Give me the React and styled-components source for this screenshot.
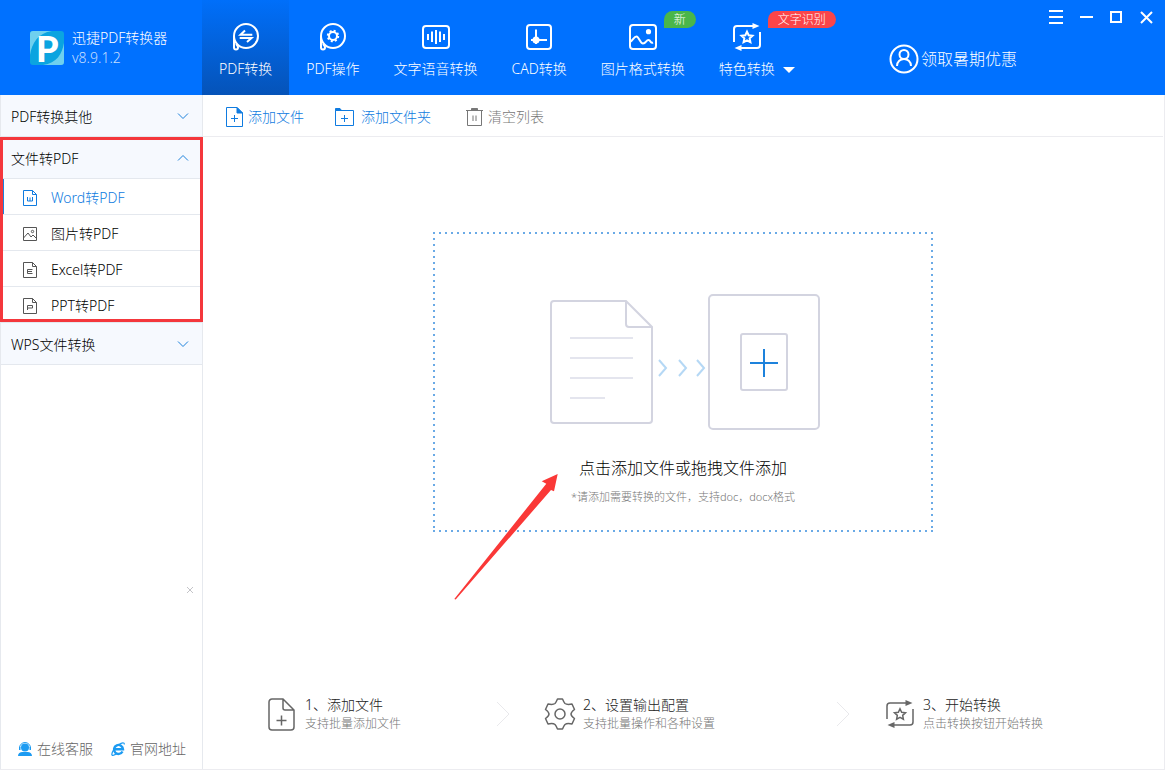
import React, { useState } from 'react';
import styled, { createGlobalStyle, css } from 'styled-components';

const starPoints = (cx, cy, outer, inner) =>
    Array.from({ length: 10 }, (_, i) => {
        const r = i % 2 ? inner : outer;
        const a = (Math.PI / 5) * i - Math.PI / 2;
        return `${(cx + r * Math.cos(a)).toFixed(2)},${(cy + r * Math.sin(a)).toFixed(2)}`;
    }).join(' ');

const Bubble = () => (
    <>
        <circle cx='15' cy='14' r='12' />
        <path d='M3 14V25.5a2 2 0 1 0 4 0C7 24 6.300 23.500 5 22' />
    </>
);

const ConvertIcon = () => (
    <LineIcon size={30}>
        <Bubble />
        <path d='M14 8.500L9.500 12.700H21.300M8.700 16H20.500L16 20' />
    </LineIcon>
);

const OperateIcon = () => (
    <LineIcon size={30}>
        <Bubble />
        <circle cx='15' cy='14' r='4' />
        <circle cx='15' cy='14' r='5.200' strokeDasharray='2 2.084' strokeWidth='2' />
    </LineIcon>
);

const VoiceIcon = () => (
    <LineIcon size={30}>
        <rect x='2' y='4' width='26' height='22' rx='3' />
        <path d='M7 12v6M11 9.500v10.500M15 8v14M19 9.500v10.500M23 12v6' />
    </LineIcon>
);

const CadIcon = () => (
    <LineIcon size={30}>
        <rect x='3' y='3' width='24' height='24' rx='3' />
        <path d='M12 7.500V22M7 18h16' />
        <circle cx='12' cy='18' r='3.500' fill='currentColor' stroke='none' />
    </LineIcon>
);

const PictureIcon = () => (
    <LineIcon size={30}>
        <rect x='2' y='3' width='26' height='24' rx='3' />
        <circle cx='20.500' cy='9.700' r='2.600' fill='currentColor' stroke='none' />
        <path d='M2 20C5 18 6 14.500 8.500 14.500S12 21.500 15 21.500S18 18 20.500 18S22 22 25 20.500' />
    </LineIcon>
);

const CycleIcon = ({ stroke }) => (
    <LineIcon size={30} $stroke={stroke}>
        <path d='M2 20V7a3 3 0 0 1 3-3H21M28 10V23a3 3 0 0 1-3 3H9' />
        <path d='M20.500 1l7 3-7 3zM9.500 23l-7 3 7 3z' fill='currentColor' stroke='none' />
        <polygon points={starPoints(15, 15.5, 5.8, 2.8)} />
    </LineIcon>
);

const AddFileIcon = () => (
    <LineIcon size={20} $stroke={1}>
        <path d='M3.500 .5H14L19.500 6V19.500H3.500z' />
        <path d='M14 .5V6H19.500z' fill='currentColor' />
        <path d='M11.500 8v7M8 11.500h7' />
    </LineIcon>
);

const AddFolderIcon = () => (
    <LineIcon size={20} $stroke={1}>
        <path d='M-.5 3.500H17.500V18.500H-.5z' />
        <path d='M-.5 3.500V1.500H4L5.500 3.500z' fill='currentColor' />
        <path d='M8.500 8v7M5 11.500h7' />
    </LineIcon>
);

const TrashIcon = () => (
    <LineIcon size={20} $stroke={1}>
        <path d='M3 3.500H20M4.500 3.500V18.500H18.500V3.500M10 8.500V14M13 8.500V14' />
        <path d='M8.500 1.500h6v2h-6z' fill='currentColor' />
    </LineIcon>
);

const DocIcon = ({ glyph }) => (
    <LineIcon size={16} $stroke={1}>
        <path d='M1.500 .5H10.500L14.500 4.500V15.500H1.500zM10.500 .5V4.500H14.500' />
        <path d={glyph} />
    </LineIcon>
);

const ImageIcon = () => (
    <LineIcon size={16} $stroke={1}>
        <path d='M1.500 1.500H14.500V14.500H1.500zM1.500 12L6 7L9 11L11 9L14.500 12.500' />
        <circle cx='10.500' cy='5.500' r='1.200' />
    </LineIcon>
);

const StepFileIcon = () => (
    <LineIcon size={32} $stroke={1.5}>
        <path d='M7 1H17L28 12V29a3 3 0 0 1-3 3H6a3 3 0 0 1-3-3V4a3 3 0 0 1 3-3zM17 1V10a2 2 0 0 0 2 2H28' />
        <path d='M15.500 17.500v10M10.500 22.500h10' />
    </LineIcon>
);

const GearIcon = () => (
    <LineIcon size={32} $stroke={1.5}>
        <path d='M13.500 1H18.500Q20 4.500 21 5.500Q23 7 28 6L30.500 11.500Q27 14 27 16T30.500 20.500L28 26Q23 25 21 26.500Q20 27.500 18.500 31H13.500Q12 27.500 11 26.500Q9 25 4 26L1.500 20.500Q5 18 5 16T1.500 11.500L4 6Q9 7 11 5.500Q12 4.500 13.500 1z' strokeLinejoin='round' />
        <circle cx='16' cy='16' r='5' />
    </LineIcon>
);

const Chevron = ({ up }) => (
    <LineIcon size={12} $stroke={1}>
        <path d={up ? 'M1 7.500L6 2.500L11 7.500' : 'M1 2.500L6 7.500L11 2.500'} />
    </LineIcon>
);

const ServiceIcon = () => (
    <svg width='14' height='14' viewBox='0 0 14 14' fill='#1c9bf2'>
        <circle cx='7' cy='5.500' r='4' />
        <path d='M1.500 6a5.500 5.500 0 0 1 11 0' fill='none' stroke='#1c9bf2' />
        <path d='M1 5h1.500v3H1zM11.500 5H13v3h-1.500zM0 14c0-2.500 2-4 4.500-4h5c2.500 0 4.500 1.500 4.500 4z' />
    </svg>
);

const BrowserIcon = () => (
    <svg width='14' height='14' viewBox='0 0 14 14' fill='none' stroke='#1c9bf2'>
        <path d='M11.500 9.500A4.500 4.500 0 1 1 12 7.300H4' strokeWidth='2.400' />
        <path d='M8 2.500C11 .2 13.500 .2 13.300 2.500M2.500 8C.2 11.500 .3 14 2.500 13.300C3.500 13 4.500 12.500 5.500 11.800' strokeWidth='1.200' />
    </svg>
);

const TABS = [
    { name: 'PDF转换', Icon: ConvertIcon },
    { name: 'PDF操作', Icon: OperateIcon },
    { name: '文字语音转换', Icon: VoiceIcon },
    { name: 'CAD转换', Icon: CadIcon },
    { name: '图片格式转换', Icon: PictureIcon, badge: '新', tone: '#4ab64a' },
    { name: '特色转换', Icon: CycleIcon, badge: '文字识别', tone: '#fb4549', more: true },
];

const FILE_TYPES = [
    { name: 'Word转PDF', icon: <DocIcon glyph='M5.500 7V11H10.500V7M8 7.500V11' /> },
    { name: '图片转PDF', icon: <ImageIcon /> },
    { name: 'Excel转PDF', icon: <DocIcon glyph='M10.500 7.500H5.500V11.500H10.500M5.500 9.500H10' /> },
    { name: 'PPT转PDF', icon: <DocIcon glyph='M5.500 12V7.500H10.500V10H5.500' /> },
];

const STEPS = [
    { title: '1、添加文件', text: '支持批量添加文件', icon: <StepFileIcon /> },
    { title: '2、设置输出配置', text: '支持批量操作和各种设置', icon: <GearIcon /> },
    { title: '3、开始转换', text: '点击转换按钮开始转换', icon: <CycleIcon stroke={1.5} /> },
];

const App = () => {

    const [tab, setTab] = useState('PDF转换');
    const [type, setType] = useState('Word转PDF');
    const [open, setOpen] = useState(true);

    return (
        <Window>
            <GlobalStyle />
            <Header>
                <Brand>
                    <Logo width='34' height='34' viewBox='0 0 34 34' aria-hidden='true'>
                        <rect width='34' height='34' rx='3' fill='#0ba4e0' />
                        <path d='M0 24V3a3 3 0 0 1 3-3H22C8 2 2 12 0 24z' fill='#6fd0ee' />
                        <path d='M34 12V31a3 3 0 0 1-3 3H13C27 32 32 23 34 12z' fill='#6fd0ee' />
                        <text x='6' y='31'>P</text>
                    </Logo>
                    <div>
                        <BrandName>迅捷PDF转换器</BrandName>
                        <Version>v8.9.1.2</Version>
                    </div>
                </Brand>
                <Nav>
                    {TABS.map(({ name, Icon, badge, tone, more }) => (
                        <Tab key={name} $active={tab === name} onClick={() => setTab(name)}>
                            <TabBody>
                                <TabIcon>
                                    <Icon />
                                    {badge && <Badge $tone={tone}>{badge}</Badge>}
                                </TabIcon>
                                {name}
                            </TabBody>
                            {more && <Caret />}
                        </Tab>
                    ))}
                </Nav>
                <Promo href='#promo'>
                    <LineIcon size={30}>
                        <circle cx='15' cy='15' r='13.500' />
                        <circle cx='15' cy='10.500' r='4.500' />
                        <path d='M8 22C8 12.500 22 12.500 22 22' />
                    </LineIcon>
                    领取暑期优惠
                </Promo>
                <Controls>
                    <Control aria-label='菜单'>
                        <LineIcon size={16}><path d='M1 2H15M1 8H15M1 14H15' /></LineIcon>
                    </Control>
                    <Control aria-label='最小化'>
                        <LineIcon size={16}><path d='M2 8H15' /></LineIcon>
                    </Control>
                    <Control aria-label='最大化'>
                        <LineIcon size={16}><path d='M3 3H13V13H3z' /></LineIcon>
                    </Control>
                    <Control aria-label='关闭'>
                        <LineIcon size={16}><path d='M3 3L14 14M14 3L3 14' /></LineIcon>
                    </Control>
                </Controls>
            </Header>
            <Body>
                <Sidebar>
                    <GroupButton>PDF转换其他<Chevron /></GroupButton>
                    <Highlighted>
                        <GroupButton aria-expanded={open} onClick={() => setOpen(!open)}>
                            文件转PDF<Chevron up={open} />
                        </GroupButton>
                        {open && FILE_TYPES.map(({ name, icon }) => (
                            <TypeButton key={name} $active={type === name} onClick={() => setType(name)}>
                                {icon}{name}
                            </TypeButton>
                        ))}
                    </Highlighted>
                    <GroupButton>WPS文件转换<Chevron /></GroupButton>
                    <Dismiss aria-label='关闭提示'>
                        <LineIcon size={8} $stroke={1}><path d='M1 1L7 7M7 1L1 7' /></LineIcon>
                    </Dismiss>
                    <Links>
                        <SideLink href='#service'><ServiceIcon />在线客服</SideLink>
                        <SideLink href='#site'><BrowserIcon />官网地址</SideLink>
                    </Links>
                </Sidebar>
                <Main>
                    <Toolbar>
                        <Tool><AddFileIcon />添加文件</Tool>
                        <Tool><AddFolderIcon />添加文件夹</Tool>
                        <Tool $muted><TrashIcon />清空列表</Tool>
                    </Toolbar>
                    <DropArea>
                        <DropZone>
                            <svg width='274' height='136' viewBox='-4 0 274 136' fill='none' strokeWidth='2' aria-hidden='true'>
                                <g stroke='#d3d4e0'>
                                    <path d='M4 7H76L102 33V126a3 3 0 0 1-3 3H4a3 3 0 0 1-3-3V10a3 3 0 0 1 3-3zM76 7V30a3 3 0 0 0 3 3H102' />
                                    <rect x='159' y='1' width='110' height='134' rx='4' />
                                    <rect x='191' y='40' width='46' height='56' rx='2' />
                                </g>
                                <path d='M20 44H83M20 64H83M20 84H83M20 104H55' stroke='#e4e5ee' />
                                <path d='M109 66L116 74L109 82M129 66L136 74L129 82M147 66L154 74L147 82' stroke='#b5d8f5' />
                                <path d='M200 69H228M214 55V83' stroke='#1d82dc' />
                            </svg>
                            <DropTitle>点击添加文件或拖拽文件添加</DropTitle>
                            <DropHint>*请添加需要转换的文件，支持doc，docx格式</DropHint>
                        </DropZone>
                        <Pointer width='110' height='132' viewBox='0 0 110 132' aria-hidden='true'>
                            <path d='M107.700 4L91.700 11.300L96.300 13.700L4.300 129L5.700 129.500L101 20L104 21.300z' fill='#fa3837' />
                        </Pointer>
                    </DropArea>
                    <Steps>
                        {STEPS.map(({ title, text, icon }, i) => (
                            <Step key={title}>
                                <StepIcon>{icon}</StepIcon>
                                <div>
                                    <StepTitle>{title}</StepTitle>
                                    <StepText>{text}</StepText>
                                </div>
                                {i < STEPS.length - 1 && (
                                    <StepArrow width='14' height='26' viewBox='0 0 14 26' aria-hidden='true'>
                                        <path d='M1 1L13 13L1 25' fill='none' stroke='#e9e9ec' />
                                    </StepArrow>
                                )}
                            </Step>
                        ))}
                    </Steps>
                </Main>
            </Body>
        </Window>
    );
}

const GlobalStyle = createGlobalStyle`
    * {
        box-sizing: border-box;
    }

    body {
        margin: 0;
    }

    body, button {
        font-family: "Noto Sans", "Noto Sans CJK SC", sans-serif;
        font-size: 14px;
        font-weight: 300;
        line-height: 20px;
    }

    button {
        margin: 0;
        padding: 0;
        border: 0;
        background: none;
        color: inherit;
        cursor: pointer;
    }

    a {
        color: inherit;
        text-decoration: none;
    }

    svg {
        display: block;
        flex: none;
    }
`

const LineIcon = styled.svg.attrs(({ size }) => ({
    width: size,
    height: size,
    viewBox: `0 0 ${size} ${size}`,
    'aria-hidden': true,
}))`
    overflow: visible;
    fill: none;
    stroke: currentColor;
    stroke-width: ${({ $stroke }) => $stroke || 2};

    [fill='currentColor'] {
        fill: currentColor;
    }

    [stroke='none'] {
        stroke: none;
    }
`

const Window = styled.div`
    display: flex;
    flex-direction: column;
    min-height: 100vh;
    background: #fff;
    color: #000;
`

const Header = styled.header`
    display: flex;
    height: 95px;
    background: #0071ff;
    color: #fff;
`

const Brand = styled.div`
    display: flex;
    align-items: center;
    gap: 8px;
    width: 202px;
    padding-left: 30px;
`

const Logo = styled.svg`
    overflow: visible;

    text {
        font-family: Lato, sans-serif;
        font-size: 36px;
        font-weight: 900;
        fill: #fff;
    }
`

const BrandName = styled.div`
    font-size: 14px;
`

const Version = styled.div`
    color: #c4deff;
`

const Nav = styled.nav`
    display: flex;
`

const Tab = styled.button`
    display: flex;
    align-items: flex-end;
    gap: 8px;
    padding: 0 17px 16px;
    white-space: nowrap;
    ${({ $active }) => $active && css`
        background: linear-gradient(#006ffa, #0553b8);
    `}
`

const TabBody = styled.span`
    display: flex;
    flex-direction: column;
    align-items: center;
    gap: 7px;
`

const TabIcon = styled.span`
    position: relative;
`

const Badge = styled.span`
    position: absolute;
    top: -11px;
    left: 36px;
    padding: 0 10px;
    border-radius: 9px 9px 9px 0;
    background: ${({ $tone }) => $tone};
    font-size: 12px;
    line-height: 17px;
`

const Caret = styled.span`
    margin-bottom: 6px;
    border: 6px solid transparent;
    border-top-color: #fff;
    border-bottom: 0;
`

const Promo = styled.a`
    display: flex;
    align-items: center;
    gap: 2px;
    margin-left: auto;
    padding: 22px 24px 0 0;
    font-size: 16px;
    white-space: nowrap;
`

const Controls = styled.div`
    display: flex;
    align-self: flex-start;
    padding-right: 4px;
`

const Control = styled.button`
    display: flex;
    align-items: center;
    justify-content: center;
    width: 30px;
    height: 34px;
`

const Body = styled.div`
    display: flex;
    flex: 1;
    border: solid #ececf0;
    border-width: 0 1px 1px 0;
`

const Sidebar = styled.aside`
    display: flex;
    flex-direction: column;
    flex: none;
    width: 203px;
    border: solid #e6e9ee;
    border-width: 0 1px;
`

const GroupButton = styled.button`
    display: flex;
    align-items: center;
    justify-content: space-between;
    width: 100%;
    height: 42px;
    padding: 2px 13px 0 10px;
    border-bottom: 1px solid #e4e8ee;
    background: #f6f9fe;

    svg {
        color: #1d82dc;
    }
`

const Highlighted = styled.div`
    position: relative;

    &::after {
        content: '';
        position: absolute;
        inset: 0 -1px 1px;
        border: 3px solid #f4373c;
        pointer-events: none;
    }
`

const TypeButton = styled.button`
    display: flex;
    align-items: center;
    gap: 13px;
    width: 100%;
    height: 36px;
    padding: 2px 0 0 21px;
    border-bottom: 1px solid #e4e8ee;

    svg {
        color: #555;
    }

    ${({ $active }) => $active && css`
        box-shadow: inset 3px 0 #1d82dc;

        &, svg {
            color: #0f7be0;
        }
    `}
`

const Dismiss = styled.button`
    align-self: flex-end;
    margin: auto 8px 145px 0;
    color: #c4c4c8;
`

const Links = styled.div`
    display: flex;
    gap: 18px;
    padding: 0 0 10px 17px;
    color: #666;
`

const SideLink = styled.a`
    display: flex;
    align-items: center;
    gap: 5px;
    white-space: nowrap;
`

const Main = styled.main`
    display: flex;
    flex-direction: column;
    flex: 1;
    min-width: 0;
    padding-right: 1px;
`

const Toolbar = styled.div`
    display: flex;
    gap: 32px;
    height: 42px;
    padding-left: 20px;
    border-bottom: 1px solid #ececf0;
`

const Tool = styled.button`
    display: flex;
    align-items: center;
    gap: 5px;
    padding-top: 2px;
    color: ${({ $muted }) => $muted ? '#777' : '#0f7be0'};
`

const DropArea = styled.section`
    position: relative;
    align-self: center;
    margin: 95px 0;
`

const dots = angle => css`repeating-linear-gradient(${angle}, #6aaae6 0 2px, transparent 2px 6px)`

const DropZone = styled.button`
    display: flex;
    flex-direction: column;
    align-items: center;
    width: 500px;
    max-width: 100%;
    padding: 62px 0 26px;
    background:
        ${dots('90deg')} top / 100% 2px no-repeat,
        ${dots('90deg')} bottom / 100% 2px no-repeat,
        ${dots('180deg')} left / 2px 100% no-repeat,
        ${dots('180deg')} right / 2px 100% no-repeat;
`

const DropTitle = styled.span`
    margin-top: 26px;
    font-size: 16px;
    line-height: 24px;
`

const DropHint = styled.span`
    margin-top: 8px;
    color: #777;
    font-size: 11px;
    line-height: 18px;
`

const Pointer = styled.svg`
    position: absolute;
    top: 238px;
    left: 17px;
    pointer-events: none;
`

const Steps = styled.div`
    display: grid;
    grid-template-columns: 278fr 340fr 278fr;
    margin-top: auto;
    padding: 0 0 36px 64px;
`

const Step = styled.div`
    display: flex;
    align-items: center;
`

const StepIcon = styled.span`
    display: flex;
    justify-content: center;
    width: 30px;
    margin-right: 8px;
    color: #666;
`

const StepTitle = styled.div`
    color: #222;
`

const StepText = styled.div`
    color: #777;
    font-size: 12px;
    line-height: 18px;
`

const StepArrow = styled.svg`
    margin: 0 35px 0 auto;
`

export default App;
